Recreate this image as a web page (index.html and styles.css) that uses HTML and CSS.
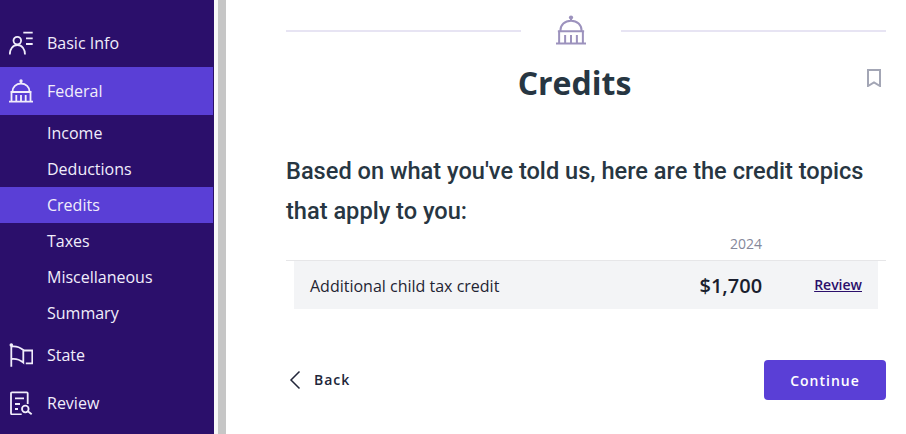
FILE: index.html
```html
<!DOCTYPE html>
<html lang="en">
<head>
<meta charset="utf-8">
<title>Credits</title>
<link rel="stylesheet" href="styles.css">
</head>
<body>
<div class="app">
  <nav class="sidebar">
    <a class="nav-item">
      <svg class="nav-icon" viewBox="0 0 24 24" fill="none" stroke="currentColor" stroke-width="1.8">
        <circle cx="8.300" cy="9.600" r="3.800"/>
        <path d="M.8 23.500c0-5.500 3-9.500 7.600-9.500s7.600 4 7.600 9.500"/>
        <path d="M14.300 1.700h9.400M17 7.300h6.700M17 13h6.700"/>
      </svg>
      <span>Basic Info</span>
    </a>
    <a class="nav-item active">
      <svg class="nav-icon" viewBox="0 0 24 24" fill="none" stroke="currentColor" stroke-width="1.8">
        <use href="#capitol"/>
      </svg>
      <span>Federal</span>
    </a>
    <a class="sub-item">Income</a>
    <a class="sub-item">Deductions</a>
    <a class="sub-item active">Credits</a>
    <a class="sub-item">Taxes</a>
    <a class="sub-item">Miscellaneous</a>
    <a class="sub-item">Summary</a>
    <a class="nav-item">
      <svg class="nav-icon" viewBox="0 0 24 24" fill="none" stroke="currentColor" stroke-width="1.8">
        <circle cx="2.300" cy="2" r="1.800" fill="currentColor" stroke="none"/>
        <path d="M2.300 2v21.700M2.300 3.500C6 3 10 3.500 14.300 7v12.500C10 16 6 15.500 2.300 16"/>
        <path d="M14.300 7.500h9v12.800h-6.500"/>
      </svg>
      <span>State</span>
    </a>
    <a class="nav-item">
      <svg class="nav-icon" viewBox="0 0 24 24" fill="none" stroke="currentColor" stroke-width="1.8">
        <path d="M12.700 23.300H3a1 1 0 0 1-1-1V2.300a1 1 0 0 1 1-1h14.700a1 1 0 0 1 1 1V13"/>
        <path d="M6 7.300h9M6 13h5M6 18h3"/>
        <circle cx="16.300" cy="18" r="3.300"/>
        <path d="M18.800 20.300l3.900 3"/>
      </svg>
      <span>Review</span>
    </a>
  </nav>
  <div class="gutter"></div>
  <main class="content">
    <div class="divider">
      <span class="line line-left"></span>
      <svg class="divider-icon" viewBox="0 0 24 24" fill="none" stroke="currentColor" stroke-width="1.6">
        <g id="capitol">
          <circle cx="12" cy="2" r="1.700" fill="currentColor" stroke="none"/>
          <path d="M12 3v1.500M3.500 12.500C3.500 8 7 4.500 12 4.500s8.500 3.500 8.500 8M1.500 13h21M2.500 13v9.500M21.500 13v9.500M0 22.700h24M7.300 16v6M12 16v6M16.700 16v6"/>
        </g>
      </svg>
      <span class="line"></span>
    </div>
    <div class="title-row">
      <h1>Credits</h1>
      <svg class="bookmark" viewBox="0 0 14 18" fill="none" stroke="currentColor" stroke-width="2">
        <path d="M1 1h12v16l-6-3.500-6 3.500z"/>
      </svg>
    </div>
    <h2>Based on what you've told us, here are the credit topics that apply to you:</h2>
    <div class="table-head"><span class="year">2024</span></div>
    <div class="table-row">
      <span class="row-label">Additional child tax credit</span>
      <span class="row-amount">$1,700</span>
      <a class="row-link" href="#">Review</a>
    </div>
    <div class="actions">
      <a class="back">
        <svg class="chevron" viewBox="0 0 12 20" fill="none" stroke="currentColor" stroke-width="1.500"><path d="M10.500 1.500L2 10l8.500 8.500"/></svg>
        <span class="back-label">Back</span>
      </a>
      <button class="continue">Continue</button>
    </div>
  </main>
</div>
</body>
</html>
```
FILE: styles.css
```css
* { box-sizing: border-box; }
html, body { margin: 0; height: 100%; }
body {
  font-family: "Open Sans", sans-serif;
  background: #fff;
  overflow: hidden;
}
.app { display: flex; width: 906px; height: 434px; }
.sidebar {
  width: 214px;
  flex: none;
  padding-top: 19px;
  background: #2b0f6b;
  border-right: 1px solid #2b0f6b;
  color: #f1edfb;
  display: flex;
  flex-direction: column;
}
.nav-item {
  height: 48px;
  display: flex;
  align-items: center;
  gap: 14px;
  padding-left: 9px;
  font-size: 16px;
  flex: none;
}
.nav-icon { width: 24px; height: 24px; flex: none; }
.sub-item {
  height: 36px;
  flex: none;
  display: flex;
  align-items: center;
  padding-left: 47px;
  font-size: 16px;
}
.active { background: #5a3fd6; }
.gutter {
  width: 12px;
  flex: none;
  background: #c6c6c6;
  border-left: 4px solid #f8f8f8;
}
.content {
  width: 600px;
  margin-left: 60px;
  flex: none;
  color: #273642;
}
.divider {
  display: flex;
  align-items: center;
  height: 30px;
  margin-top: 16px;
  color: #9c92bd;
}
.line { flex: 1; height: 2px; background: #e7e4f3; }
.line-left { flex: none; width: 235px; }
.divider-icon { width: 30px; height: 30px; margin: -2px 35px 0; flex: none; }
.title-row { display: flex; align-items: flex-start; margin-top: 15px; }
h1 {
  flex: 1;
  margin: 0;
  padding-right: 4px;
  text-align: center;
  font-size: 32px;
  line-height: 44px;
  font-weight: 700;
  color: #273642;
}
.bookmark { width: 14px; height: 18px; margin: 8px 5px 0 0; color: #a3a6b5; flex: none; }
h2 {
  margin: 46px 0 0;
  font-family: "Roboto", sans-serif;
  font-size: 23.6px;
  line-height: 40px;
  font-weight: 500;
  color: #273642;
}
.table-head {
  height: 30px;
  display: flex;
  align-items: center;
  justify-content: flex-end;
  padding: 0 124px 5px 0;
  border-bottom: 1px solid #e6e6e8;
}
.year { font-size: 14px; font-weight: 500; color: #85889a; }
.table-row {
  margin: 0 8px;
  height: 48px;
  background: #f3f4f6;
  display: flex;
  align-items: center;
  padding: 0 16px;
}
.row-label { flex: 1; padding-top: 2px; font-size: 16px; color: #1f2433; }
.row-amount { font-size: 20px; font-weight: 600; color: #1a1e2e; }
.row-link {
  margin-left: 52px;
  padding-bottom: 1px;
  font-size: 14px;
  font-weight: 600;
  color: #2b0f6b;
}
.actions {
  margin-top: 51px;
  display: flex;
  align-items: center;
  justify-content: space-between;
}
.back {
  display: flex;
  align-items: center;
  gap: 13px;
  padding-left: 3px;
  font-size: 14px;
  font-weight: 600;
  letter-spacing: 1px;
  color: #22263a;
}
.back-label { padding-bottom: 2px; }
.chevron { width: 12px; height: 20px; }
.continue {
  width: 122px;
  height: 40px;
  border: 0;
  border-radius: 4px;
  background: #5a3fd6;
  color: #fff;
  font-family: "Open Sans", sans-serif;
  font-size: 14px;
  font-weight: 600;
  letter-spacing: 1px;
}
```
